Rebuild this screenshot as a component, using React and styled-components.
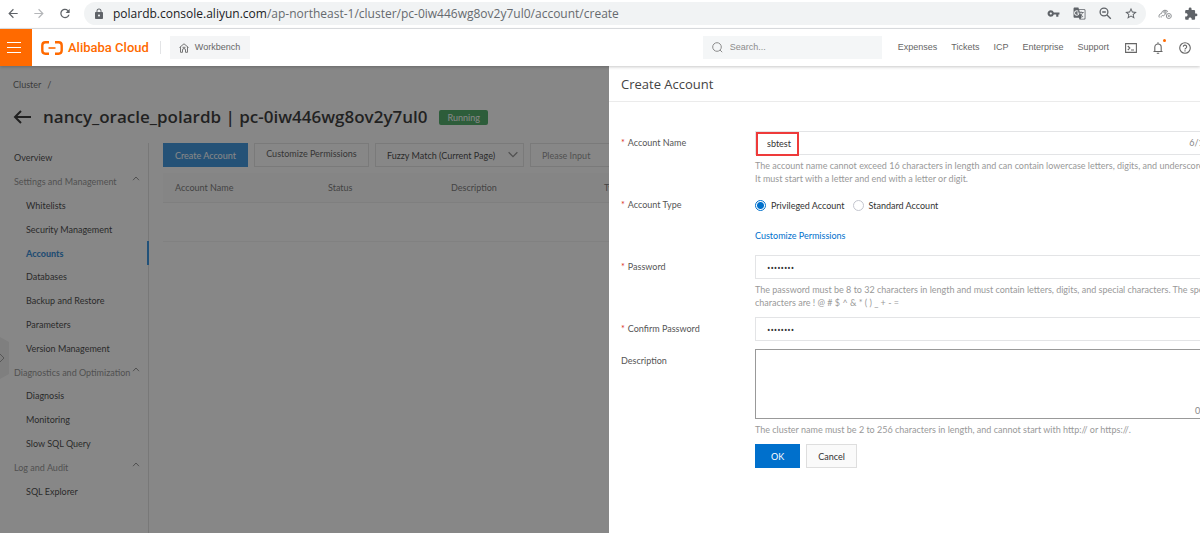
import React from "react";
import styled, { createGlobalStyle, css } from "styled-components";
import {
  MdArrowBack,
  MdArrowForward,
  MdRefresh,
  MdLock,
  MdVpnKey,
  MdGTranslate,
  MdStarBorder,
  MdExtension,
} from "react-icons/md";

const uiFont = 'Lato, "Noto Sans", sans-serif';
const displayFont = '"Open Sans", "Noto Sans", sans-serif';
const navFont = '"Liberation Sans", Arial, sans-serif';

const GlobalStyle = createGlobalStyle`
  *, *::before, *::after { box-sizing: border-box; }
  body {
    margin: 0;
    overflow: hidden;
    background: #fff;
    font-family: ${uiFont};
    font-size: 9px;
    line-height: 13px;
    color: #333;
  }
  button, input, select, textarea { font: inherit; color: inherit; margin: 0; }
  a { color: inherit; text-decoration: none; }
  ul { list-style: none; margin: 0; padding: 0; }
  h1, h2, p { margin: 0; }
`;

const Page = styled.div`
  display: flex;
  flex-direction: column;
  min-height: 100vh;
`;

/* Browser bar */
const BrowserBar = styled.div`
  display: flex;
  align-items: center;
  height: 29px;
  padding: 0 2px 1px 6px;
  gap: 12px;
  border-bottom: 1px solid #dfe1e5;
  color: #5f6368;
`;

const IconButton = styled.button`
  display: flex;
  flex: none;
  align-items: center;
  justify-content: center;
  width: ${(p) => p.$width || 14}px;
  height: 16px;
  padding: 0;
  border: 0;
  background: none;
  color: ${(p) => p.$color || "inherit"};
`;

const AddressBar = styled.div`
  display: flex;
  flex: 1;
  align-items: center;
  height: 23px;
  padding: 0 8px 0 9px;
  border-radius: 12px;
  background: #f1f3f4;
  gap: 12px;
`;

const Url = styled.div`
  flex: 1;
  margin-left: -4px;
  font-family: ${displayFont};
  font-size: 12px;
  line-height: 16px;
  color: #666a6e;
  white-space: nowrap;

  span { color: #202124; }
`;

/* Console header */
const Header = styled.header`
  position: relative;
  z-index: 3;
  display: flex;
  align-items: center;
  height: 37px;
  background: #fff;
  box-shadow: 0 1px 3px rgba(0, 0, 0, 0.22);
  font-family: ${navFont};
  color: #666;
`;

const MenuButton = styled.button`
  display: flex;
  flex-direction: column;
  align-items: flex-start;
  justify-content: center;
  gap: 4px;
  align-self: stretch;
  width: 32px;
  padding: 0 0 0 7px;
  border: 0;
  background: #ff6a00;

  i { width: 14px; height: 1px; background: #fff; }
`;

const Brand = styled.a`
  display: flex;
  align-items: center;
  gap: 5px;
  margin-left: 9px;
  color: #ff6a00;
  font-family: Roboto, ${navFont};
  font-weight: 500;
  font-size: 13px;
  line-height: 20px;
  white-space: nowrap;
`;

const HeaderDivider = styled.span`
  width: 1px;
  height: 13px;
  margin: 0 9px 0 11px;
  background: #e3e4e6;
`;

const Workbench = styled.button`
  display: flex;
  align-items: center;
  gap: 6px;
  height: 23px;
  padding: 0 10px 0 9px;
  border: 0;
  background: #f4f5f6;
`;

const SearchBox = styled.label`
  display: flex;
  align-items: center;
  gap: 7px;
  width: 179px;
  height: 23px;
  margin-left: auto;
  padding-left: 9px;
  background: #f4f6f7;
  color: #8c8c8c;

  input {
    flex: 1;
    min-width: 0;
    padding: 0;
    border: 0;
    outline: 0;
    background: none;
  }
  input::placeholder { color: #8c8c8c; opacity: 1; }
`;

const HeaderNav = styled.nav`
  display: flex;
  align-items: center;
  gap: 14px;
  margin: 0 15px 0 16px;
`;

const HeaderTools = styled.div`
  display: flex;
  gap: 13px;
  padding-right: 8px;
`;

const ToolButton = styled(IconButton)`
  position: relative;

  &::after {
    content: ${(p) => (p.$alert ? '""' : "none")};
    position: absolute;
    top: -1px;
    right: -1px;
    width: 3px;
    height: 3px;
    border-radius: 50%;
    background: #ff6a00;
  }
`;

/* Workspace */
const Workspace = styled.div`
  position: relative;
  flex: 1;
  overflow: hidden;
`;

const Mask = styled.div`
  position: absolute;
  inset: 0;
  z-index: 1;
  background: rgba(55, 55, 55, 0.6);
`;

const Breadcrumb = styled.nav`
  display: flex;
  gap: 6px;
  padding: 12px 13px 0;
  color: #444;
`;

const TitleBar = styled.div`
  display: flex;
  align-items: center;
  height: 52px;
  padding: 0 13px;

  h1 {
    margin: 0 12px 0 12px;
    font-family: ${displayFont};
    font-size: 17px;
    line-height: 24px;
    font-weight: 600;
    color: #000;
    white-space: nowrap;
  }
`;

const StatusTag = styled.span`
  padding: 1px 8px;
  border-radius: 2px;
  background: #1e9640;
  color: #fff;
`;

const Columns = styled.div`
  display: flex;
`;

const Sidebar = styled.nav`
  flex: none;
  width: 149px;
  min-height: 390px;
  padding-top: 3px;
  border-right: 1px solid #d9d9d9;
`;

const Menu = styled.ul`
  display: grid;
  grid-template-columns: minmax(0, 1fr);
  grid-auto-rows: 1fr;
  height: 357px;
`;

const MenuItem = styled.li`
  display: flex;
  align-items: center;
  justify-content: space-between;
  padding: 0 8px 0 ${(p) => (p.$child ? 26 : 14)}px;
  color: ${(p) => (p.$group ? "#777" : "#111")};
  white-space: nowrap;
  ${(p) =>
    p.$active &&
    css`
      margin-right: -1px;
      border-right: 2px solid #0078dc;
      color: #0070cc;
      font-weight: 900;
    `}

  svg { margin-bottom: 6px; }
`;

const SideHandle = styled.button`
  position: absolute;
  top: 271px;
  left: 0;
  display: flex;
  align-items: center;
  width: 9px;
  height: 42px;
  padding: 0;
  border: 0;
  background: #eaeaea;
  clip-path: polygon(0 0, 100% 12%, 100% 88%, 0 100%);
  color: #888;
`;

const Main = styled.main`
  flex: 1;
  min-width: 0;
  padding-left: 14px;
`;

const Toolbar = styled.div`
  display: flex;
  gap: 6px;
  margin-bottom: 6px;
`;

const Button = styled.button`
  height: 24px;
  padding: 0 ${(p) => p.$pad || 11}px;
  border: 1px solid ${(p) => (p.$primary ? "#0070cc" : "#dedede")};
  background: ${(p) => (p.$primary ? "#0070cc" : "#fafafa")};
  color: ${(p) => (p.$primary ? "#fff" : "#333")};
  white-space: nowrap;
`;

const CreateButton = styled(Button)`
  border-color: #0a7cd8;
  background: #0a7cd8;
`;

const PermissionsButton = styled(Button)`
  width: 115px;
  padding: 0 0 3px;
  background: #fff;
`;

const SelectBox = styled.div`
  position: relative;
  width: 149px;

  select {
    width: 100%;
    height: 24px;
    padding: 0 11px;
    border: 1px solid #dedede;
    border-radius: 0;
    background: #fff;
    color: #111;
    appearance: none;
  }
  svg { position: absolute; top: 8px; right: 6px; }
`;

const textField = css`
  display: block;
  width: 100%;
  height: 24px;
  padding: 0 11px;
  border: 1px solid #e3e4e6;
  border-radius: 0;
  outline: 0;
  background: #fff;
`;

const FilterInput = styled.input`
  ${textField}
  width: 180px;
  border-color: #dedede;
  &::placeholder { color: #777; opacity: 1; }
`;

const Table = styled.table`
  width: 100%;
  table-layout: fixed;
  border-collapse: collapse;

  th {
    height: 29px;
    padding: 0 12px;
    border-bottom: 1px solid #ebebeb;
    background: #fafafa;
    font-weight: 400;
    text-align: left;
    color: #555;
  }
  td {
    height: 39px;
    border-bottom: 1px solid #f0f0f0;
  }
`;

/* Drawer */
const Drawer = styled.section`
  position: absolute;
  top: 0;
  bottom: 0;
  left: calc(50% + 9px);
  right: -32px;
  z-index: 2;
  background: #fff;
`;

const DrawerHeader = styled.div`
  padding: 9px 12px 8px;
  border-bottom: 1px solid #ebebeb;

  h2 {
    font-family: ${displayFont};
    font-size: 13px;
    line-height: 18px;
    font-weight: 400;
    color: #444;
  }
`;

const Form = styled.form`
  display: flex;
  flex-direction: column;
  gap: 8px;
  padding: 29px 12px 0;
`;

const Field = styled.div`
  display: grid;
  grid-template-columns: 134px minmax(0, 1fr);
`;

const Label = styled.label`
  line-height: 24px;
  color: #555;

  &::before {
    content: ${(p) => (p.$required ? '"*"' : "none")};
    margin-right: 3px;
    color: #d93026;
  }
`;

const Control = styled.div`
  position: relative;
`;

const TextInput = styled.input`
  ${textField}

  &[type="password"] { font-family: ${displayFont}; }
`;

const TextArea = styled.textarea`
  ${textField}
  height: 70px;
  border-color: #999;
  resize: none;
`;

const Counter = styled.span`
  position: absolute;
  top: ${(p) => p.$top}px;
  right: ${(p) => p.$right}px;
  color: #888;
  line-height: 16px;
`;

const Highlight = styled.div`
  position: absolute;
  top: 1px;
  left: 1px;
  width: 43px;
  height: 24px;
  border: 2px solid #ee3a3a;
  pointer-events: none;
`;

const Help = styled.p`
  margin-top: 4px;
  color: #999;
  white-space: nowrap;
`;

const Radios = styled.div`
  display: flex;
  align-items: center;
  gap: 8px;
  height: 24px;

  label {
    display: flex;
    align-items: center;
    gap: 5px;
  }
  input {
    appearance: none;
    width: 11px;
    height: 11px;
    border: 1px solid #c4c6cf;
    border-radius: 50%;
    background: #fff;
  }
  input:checked {
    border-color: #0070cc;
    background: radial-gradient(circle, #0070cc 3px, #fff 4px);
  }
`;

const TextLink = styled.a`
  display: block;
  width: max-content;
  margin-top: 8px;
  line-height: 22px;
  color: #0070cc;
`;

const Actions = styled.div`
  display: flex;
  gap: 6px;
  padding-left: 134px;
`;

const Chevron = ({ direction, width = 8, height = 5 }) => (
  <svg width={width} height={height} viewBox="0 0 8 5" fill="none" stroke="#777" strokeWidth="1" aria-hidden="true">
    <path d={direction === "up" ? "M1 4.2 4 1l3 3.2" : "M.5.7 4 4.2 7.5.7"} />
  </svg>
);

const menu = [
  { text: "Overview" },
  { text: "Settings and Management", group: true },
  { text: "Whitelists", child: true },
  { text: "Security Management", child: true },
  { text: "Accounts", child: true, active: true },
  { text: "Databases", child: true },
  { text: "Backup and Restore", child: true },
  { text: "Parameters", child: true },
  { text: "Version Management", child: true },
  { text: "Diagnostics and Optimization", group: true },
  { text: "Diagnosis", child: true },
  { text: "Monitoring", child: true },
  { text: "Slow SQL Query", child: true },
  { text: "Log and Audit", group: true },
  { text: "SQL Explorer", child: true },
];

export default function App() {
  return (
    <Page>
      <GlobalStyle />
      <BrowserBar>
        <IconButton aria-label="Back"><MdArrowBack size={15} /></IconButton>
        <IconButton aria-label="Forward" $color="#b4b6b9"><MdArrowForward size={15} /></IconButton>
        <IconButton aria-label="Reload"><MdRefresh size={17} /></IconButton>
        <AddressBar>
          <MdLock size={12} />
          <Url><span>polardb.console.aliyun.com</span>/ap-northeast-1/cluster/pc-0iw446wg8ov2y7ul0/account/create</Url>
          <IconButton aria-label="Saved passwords"><MdVpnKey size={13} /></IconButton>
          <IconButton aria-label="Translate page"><MdGTranslate size={13} /></IconButton>
          <IconButton aria-label="Zoom out">
            <svg width="13" height="13" viewBox="0 0 13 13" fill="none" stroke="currentColor" strokeWidth="1.300">
              <circle cx="5" cy="5" r="3.900" />
              <path d="m8 8 3.800 3.800M3.200 5h3.600" />
            </svg>
          </IconButton>
          <IconButton aria-label="Bookmark"><MdStarBorder size={15} /></IconButton>
        </AddressBar>
        <IconButton aria-label="Cloud extension" $color="#8d9093">
          <svg width="14" height="12" viewBox="0 0 14 12" fill="none" stroke="currentColor" strokeWidth="1">
            <path d="M1.300 9.500A2.700 2.700 0 0 1 3.500 5.500 3.600 3.600 0 0 1 10 3.700" />
            <path d="M3.200 9.500a1.500 1.500 0 0 1 2.400-1.600L8.500 4.800" />
            <circle cx="10.800" cy="8" r="2.500" />
            <circle cx="10.800" cy="8" r=".7" />
            <circle cx="7" cy="4" r="1.200" />
          </svg>
        </IconButton>
        <IconButton aria-label="Extensions"><MdExtension size={14} /></IconButton>
      </BrowserBar>

      <Header>
        <MenuButton aria-label="Open menu"><i /><i /><i /></MenuButton>
        <Brand href="#">
          <svg width="22" height="14" viewBox="0 0 22 14" fill="none" stroke="currentColor" aria-hidden="true">
            <path d="M8 1.300H4.400Q1.300 1.300 1.300 4.400v5.200q0 3.100 3.100 3.100H8M14 1.300h3.600q3.100 0 3.100 3.100v5.200q0 3.100-3.100 3.100H14" strokeWidth="2.400" />
            <path d="M7.500 7h7" strokeWidth="1.600" />
          </svg>
          Alibaba Cloud
        </Brand>
        <HeaderDivider />
        <Workbench>
          <svg width="10" height="10" viewBox="0 0 10 10" fill="none" stroke="#777" strokeWidth="1" aria-hidden="true">
            <path d="M.5 4.500 5 .8l4.500 3.700M1.500 4v5.300h2V7a1.500 1.500 0 0 1 3 0v2.300h2V4M3.500 4.300h3" />
          </svg>
          Workbench
        </Workbench>
        <SearchBox>
          <svg width="11" height="11" viewBox="0 0 11 11" fill="none" stroke="currentColor" strokeWidth="1" aria-hidden="true">
            <circle cx="5" cy="5" r="4.300" />
            <path d="m8 8 2.200 2.200" />
          </svg>
          <input aria-label="Search" placeholder="Search..." />
        </SearchBox>
        <HeaderNav>
          <a href="#">Expenses</a>
          <a href="#">Tickets</a>
          <a href="#">ICP</a>
          <a href="#">Enterprise</a>
          <a href="#">Support</a>
        </HeaderNav>
        <HeaderTools>
          <ToolButton aria-label="Cloud Shell">
            <svg width="12" height="10" viewBox="0 0 12 10" fill="none" stroke="currentColor" strokeWidth="1.100">
              <path d="M.6.6h10.800v8.800H.6zM2.800 3l2 2-2 2M6 7h3" />
            </svg>
          </ToolButton>
          <ToolButton aria-label="Notifications" $alert>
            <svg width="10" height="12" viewBox="0 0 10 12" fill="none" stroke="currentColor" strokeWidth="1.100">
              <path d="M.5 9.500h9M1.800 9.500V5.200a3.200 3.200 0 0 1 6.400 0v4.300M5 .3V2M3.800 11.300h2.400" />
            </svg>
          </ToolButton>
          <ToolButton aria-label="Help">
            <svg width="12" height="12" viewBox="0 0 12 12" fill="none" stroke="currentColor" strokeWidth="1.100">
              <circle cx="6" cy="6" r="5.300" />
              <path d="M4.300 4.800a1.700 1.700 0 1 1 2.500 1.500Q6 6.700 6 7.600M6 8.300v1.200" />
            </svg>
          </ToolButton>
        </HeaderTools>
      </Header>

      <Workspace>
        <Breadcrumb aria-label="Breadcrumb"><a href="#">Cluster</a><span>/</span></Breadcrumb>
        <TitleBar>
          <IconButton aria-label="Back to clusters" $width={18} $color="#000">
            <svg width="18" height="14" viewBox="0 0 18 14" fill="none" stroke="currentColor" strokeWidth="2">
              <path d="M8 1 2 7l6 6M2 7h16" />
            </svg>
          </IconButton>
          <h1>nancy_oracle_polardb | pc-0iw446wg8ov2y7ul0</h1>
          <StatusTag>Running</StatusTag>
        </TitleBar>
        <Columns>
          <Sidebar>
            <Menu>
              {menu.map((item) => (
                <MenuItem key={item.text} $child={item.child} $group={item.group} $active={item.active}>
                  <a href="#">{item.text}</a>
                  {item.group && <Chevron direction="up" />}
                </MenuItem>
              ))}
            </Menu>
          </Sidebar>
          <Main>
            <Toolbar>
              <CreateButton $primary>Create Account</CreateButton>
              <PermissionsButton>Customize Permissions</PermissionsButton>
              <SelectBox>
                <select aria-label="Match mode"><option>Fuzzy Match (Current Page)</option></select>
                <Chevron direction="down" width={10} height={7} />
              </SelectBox>
              <FilterInput aria-label="Filter" placeholder="Please Input" />
            </Toolbar>
            <Table>
              <colgroup>
                <col width="153" />
                <col width="123" />
                <col width="153" />
                <col />
              </colgroup>
              <thead>
                <tr><th>Account Name</th><th>Status</th><th>Description</th><th>Type</th></tr>
              </thead>
              <tbody><tr><td colSpan={4} /></tr></tbody>
            </Table>
          </Main>
        </Columns>
        <SideHandle aria-label="Expand panel">
          <svg width="6" height="8" viewBox="0 0 6 8" fill="none" stroke="currentColor"><path d="m0 0 4 4-4 4" /></svg>
        </SideHandle>
        <Mask />

        <Drawer role="dialog" aria-labelledby="drawer-title">
          <DrawerHeader><h2 id="drawer-title">Create Account</h2></DrawerHeader>
          <Form onSubmit={(e) => e.preventDefault()}>
            <Field>
              <Label htmlFor="name" $required>Account Name</Label>
              <Control>
                <TextInput id="name" defaultValue="sbtest" maxLength={16} />
                <Counter $top={4} $right={11}>6/16</Counter>
                <Highlight />
                <Help>
                  The account name cannot exceed 16 characters in length and can contain lowercase letters, digits, and underscores.
                  <br />
                  It must start with a letter and end with a letter or digit.
                </Help>
              </Control>
            </Field>
            <Field>
              <Label as="span" $required>Account Type</Label>
              <Control>
                <Radios>
                  <label><input type="radio" name="type" defaultChecked />Privileged Account</label>
                  <label><input type="radio" name="type" />Standard Account</label>
                </Radios>
                <TextLink href="#">Customize Permissions</TextLink>
              </Control>
            </Field>
            <Field>
              <Label htmlFor="password" $required>Password</Label>
              <Control>
                <TextInput id="password" type="password" defaultValue="password" />
                <Help>
                  The password must be 8 to 32 characters in length and must contain letters, digits, and special characters. The special
                  <br />
                  characters are ! @ # $ ^ &amp; * ( ) _ + - =
                </Help>
              </Control>
            </Field>
            <Field>
              <Label htmlFor="confirm" $required>Confirm Password</Label>
              <Control><TextInput id="confirm" type="password" defaultValue="password" /></Control>
            </Field>
            <Field>
              <Label htmlFor="description">Description</Label>
              <Control>
                <TextArea id="description" />
                <Counter $top={54} $right={0}>0/256</Counter>
                <Help>The cluster name must be 2 to 256 characters in length, and cannot start with http:// or https://.</Help>
              </Control>
            </Field>
            <Actions>
              <Button $primary $pad={15} type="submit">OK</Button>
              <Button type="button">Cancel</Button>
            </Actions>
          </Form>
        </Drawer>
      </Workspace>
    </Page>
  );
}
